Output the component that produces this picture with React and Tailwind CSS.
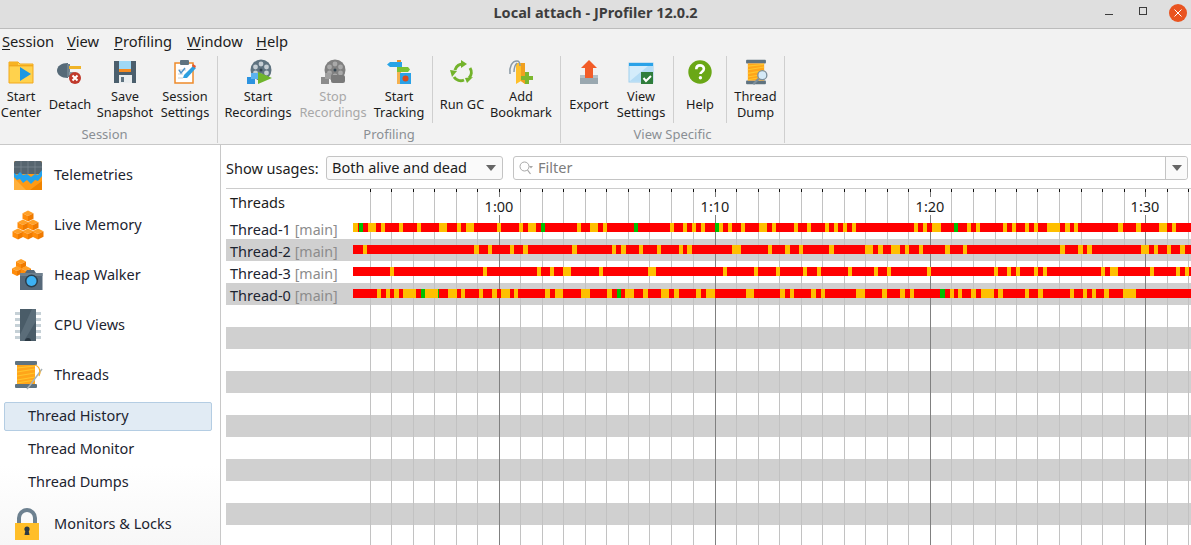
import React from "react";

const FONT = "font-['Noto_Sans','Open_Sans',sans-serif]";

function Cube({ x, y, s = 5.5 }) {
  const h = s / 2;
  return (
    <g>
      <polygon points={`${x},${y - s} ${x + s},${y - h} ${x},${y} ${x - s},${y - h}`} fill="#ffa028" />
      <polygon points={`${x - s},${y - h} ${x},${y} ${x},${y + s} ${x - s},${y + h}`} fill="#ff8c0a" />
      <polygon points={`${x + s},${y - h} ${x},${y} ${x},${y + s} ${x + s},${y + h}`} fill="#ef7a00" />
    </g>
  );
}

function Spool() {
  return (
    <g>
      <rect x="3" y="2" width="22" height="4" rx="1" fill="#5f7380" />
      <rect x="3" y="25" width="22" height="4" rx="1" fill="#5f7380" />
      <rect x="5" y="6" width="18" height="19" fill="#ffa51a" />
      <path d="M5 9l18-2M5 13l18-3M5 17l18-3M5 21l18-3M5 24l18-3" stroke="#ffc62e" strokeWidth="1.2" />
    </g>
  );
}

function Reel({ c = "#5f7380", hole = "#c5ced4" }) {
  return (
    <g>
      <circle cx="15" cy="11" r="10.5" fill={c} />
      {[[15, 5], [15, 17], [9.5, 8], [20.5, 8], [9.5, 14], [20.5, 14]].map(([a, b], i) => (
        <circle key={i} cx={a} cy={b} r="2.4" fill={hole} />
      ))}
      <circle cx="15" cy="11" r="1.5" fill="#33444f" />
    </g>
  );
}

const icons = {
  startCenter: (
    <svg width="26" height="26" viewBox="0 0 26 26">
      <path d="M1 4h9l2 2h13v19H1z" fill="#ffd24d" stroke="#f2a81d" />
      <rect x="1" y="4" width="9" height="4" fill="#f7b322" />
      <rect x="1" y="7" width="24" height="1.4" fill="#f2a81d" />
      <polygon points="12,9 23,16 12,23" fill="#1c97e2" />
    </svg>
  ),
  detach: (
    <svg width="26" height="26" viewBox="0 0 26 26">
      <path d="M11 5v15C4 20 0 16.500 0 12.500S4 5 11 5z" fill="#566a78" />
      <rect x="10" y="6" width="3" height="13" fill="#6f818d" />
      <rect x="12" y="8" width="12" height="3" fill="#f0b429" />
      <rect x="12" y="14" width="5" height="3" fill="#8899a3" />
      <circle cx="18" cy="20" r="6" fill="#c0392b" />
      <path d="M15.500 17.500l5 5m0-5l-5 5" stroke="#fff" strokeWidth="2" />
    </svg>
  ),
  save: (
    <svg width="26" height="26" viewBox="0 0 26 26">
      <path d="M2 3h22v22H2z" fill="#4b5f6d" />
      <rect x="7" y="3" width="12" height="8" fill="#9fd8f5" />
      <rect x="7" y="11" width="12" height="3" fill="#f58a1f" />
      <rect x="7" y="17" width="13" height="8" fill="#e9edef" />
      <rect x="9" y="19" width="3" height="5" fill="#5f7380" />
    </svg>
  ),
  settings: (
    <svg width="26" height="26" viewBox="0 0 26 26">
      <rect x="3" y="5" width="18" height="20" fill="#fff" stroke="#ee8a2a" strokeWidth="1.5" />
      <rect x="8" y="2" width="9" height="5" rx="1" fill="#5f7380" />
      <path d="M6 12h8M6 16h5M6 20h5" stroke="#c7cfd4" strokeWidth="1.2" />
      <path d="M11 20l1-3 9-9 3 2-9 10z" fill="#2d9fe0" />
      <path d="M21 6l3 2-1 2-3-2z" fill="#e8552c" />
      <path d="M7 12l2 3 4-5" stroke="#4f93c9" strokeWidth="1.4" fill="none" />
    </svg>
  ),
  startRec: (
    <svg width="28" height="26" viewBox="0 0 28 26">
      <g transform="translate(2 1)"><Reel /></g>
      <rect x="3" y="19" width="8" height="7" fill="#2c93e0" />
      <rect x="7" y="15" width="7" height="6" fill="#5cb3ef" />
      <polygon points="14,14 28,20 14,26" fill="#6fb52c" />
    </svg>
  ),
  stopRec: (
    <svg width="28" height="26" viewBox="0 0 28 26">
      <g transform="translate(1 1)"><Reel c="#808080" hole="#a9a9a9" /></g>
      <rect x="2" y="19" width="8" height="7" fill="#8c8c8c" />
      <rect x="6" y="15" width="6" height="6" fill="#a0a0a0" />
      <rect x="12" y="17" width="14" height="8" rx="2" fill="#7a7a7a" />
    </svg>
  ),
  track: (
    <svg width="26" height="26" viewBox="0 0 26 26">
      <rect x="11" y="2" width="4" height="24" fill="#f5b14f" />
      <rect x="11" y="2" width="4" height="2" fill="#ef8d1f" />
      <polygon points="1,6.500 4,4 16,4 16,9 4,9" fill="#28a4e6" />
      <polygon points="11,9 22,9 24,11.500 22,14 11,14" fill="#7cc231" />
      <rect x="14" y="15" width="11" height="11" fill="#2aa2e8" />
      <circle cx="19.500" cy="20.500" r="3" fill="#d94a1c" />
    </svg>
  ),
  gc: (
    <svg width="26" height="26" viewBox="0 0 26 26">
      <g fill="none" stroke="#73b32b" strokeWidth="3">
        <path d="M6 12a8 8 0 0 1 9-6" />
        <path d="M21 10a8 8 0 0 1-1 10" />
        <path d="M15 22a8 8 0 0 1-10-3" />
      </g>
      <polygon points="12,2 18,6 12,10" fill="#73b32b" />
      <polygon points="24,19 16,20 18,25" fill="#73b32b" />
      <polygon points="1,12 8,13 3,19" fill="#73b32b" />
    </svg>
  ),
  bookmark: (
    <svg width="28" height="26" viewBox="0 0 28 26">
      <path d="M9 5h9v21l-4-3-5 3z" fill="#ffc02a" />
      <path d="M14 5h4v21l-4-3z" fill="#f0a020" />
      <path d="M3 16c-1-7 2-13 7-13 2 0 3 2 3 5M7 14c0-4 1-7 3-9" stroke="#8a9aa5" strokeWidth="1.500" fill="none" />
      <path d="M14 20h12M20 14v12" stroke="#7cb82f" strokeWidth="4" />
    </svg>
  ),
  exportI: (
    <svg width="22" height="26" viewBox="0 0 22 26">
      <rect x="2" y="17" width="18" height="9" fill="#b3bfc6" />
      <rect x="2" y="20" width="18" height="6" fill="#9aa8b0" />
      <polygon points="11,2 19,10 15,10 15,20 7,20 7,10 3,10" fill="#f25c28" />
    </svg>
  ),
  viewSettings: (
    <svg width="26" height="26" viewBox="0 0 26 26">
      <rect x="1" y="5" width="24" height="19" fill="#d4ecfb" stroke="#9fd0ee" />
      <rect x="1" y="5" width="24" height="3" fill="#2aa2e8" />
      <polygon points="2,23 20,8 24,8 24,23" fill="#b5dcf5" />
      <rect x="13" y="14" width="12" height="12" fill="#2f7d3b" />
      <path d="M15.500 20l2.500 3 5-5" stroke="#fff" strokeWidth="2" fill="none" />
    </svg>
  ),
  help: (
    <svg width="24" height="26" viewBox="0 0 24 26">
      <circle cx="12" cy="14" r="11.700" fill="#6aa716" />
      <path d="M8.300 11.200c0-2.500 1.800-3.800 3.800-3.800s3.800 1.300 3.800 3.400c0 2.900-3.500 2.800-3.500 5.300" stroke="#fff" strokeWidth="2.600" fill="none" />
      <circle cx="12.400" cy="19.800" r="1.700" fill="#fff" />
    </svg>
  ),
  dump: (
    <svg width="26" height="28" viewBox="0 0 28 31">
      <Spool />
      <circle cx="21" cy="19" r="5" fill="#d5eaf7" stroke="#7d8f9b" strokeWidth="1.500" />
      <path d="M17 23l-6 6" stroke="#7d8f9b" strokeWidth="2.400" />
    </svg>
  ),
  telemetries: (
    <svg width="32" height="32" viewBox="0 0 32 32">
      <rect x="2" y="2" width="28" height="29" rx="1.500" fill="#ff9a14" />
      <polygon points="2,31 2,19 14,31" fill="#ffb03c" />
      <polygon points="30,22 18,31 30,31" fill="#f08400" />
      <path d="M3.500 2h25A1.500 1.500 0 0 1 30 3.500V15H2V3.500A1.500 1.500 0 0 1 3.500 2z" fill="#56656f" />
      <path d="M9 2v13M16 2v13M23 2v13M2 8h28" stroke="#7d8a93" strokeWidth="0.700" />
      <path d="M2 14l3 2 3-3 3 3 4-1 4 3 4-3 3 1 4-5v6l-4 5-3-1-4 4-4-4-4 3-3-4-3 1-3-3z" fill="#22a3ee" />
    </svg>
  ),
  memory: (
    <svg width="32" height="32" viewBox="0 0 32 32">
      <Cube x={16} y={7} />
      <Cube x={11} y={16} />
      <Cube x={21} y={16} />
      <Cube x={6} y={25} />
      <Cube x={16} y={25} />
      <Cube x={26} y={25} />
    </svg>
  ),
  heap: (
    <svg width="32" height="32" viewBox="0 0 32 32">
      <Cube x={9} y={5} s={5} />
      <Cube x={5} y={12} s={5} />
      <Cube x={14} y={12} s={5} />
      <path d="M8 14h5l2-3h7l2 3h6.500v17H8z" fill="#56697a" />
      <rect x="8" y="14" width="22.500" height="3" fill="#6f808e" />
      <circle cx="19.500" cy="22" r="6.500" fill="#2a3f4e" />
      <circle cx="19.500" cy="22" r="5" fill="#3cb1f3" />
    </svg>
  ),
  cpu: (
    <svg width="32" height="32" viewBox="0 0 32 32">
      {[4, 10, 16, 22, 28].map((y) => (
        <rect key={y} x="3" y={y - 1} width="26" height="3" fill="#c5d0d6" />
      ))}
      <rect x="8" y="0" width="16" height="32" fill="#4a5c68" />
      <polygon points="24,0 24,12 12,32 8,32 8,26 20,0" fill="#5b6d79" />
      <path d="M13 32a3 3 0 0 1 6 0z" fill="#2a3842" />
    </svg>
  ),
  threads: (
    <svg width="32" height="32" viewBox="0 0 32 32">
      <Spool />
      <path d="M30 10l-11 15-4 5" stroke="#a7b2b9" strokeWidth="1.500" fill="none" />
      <path d="M23 6c3 1 5 4 5 8l-1 3" stroke="#ffb01f" strokeWidth="1.200" fill="none" />
    </svg>
  ),
  lock: (
    <svg width="32" height="32" viewBox="0 0 32 32">
      <path d="M7 17V10a8 8 0 0 1 16 0v7" stroke="#6d8190" strokeWidth="4" fill="none" />
      <rect x="3" y="15" width="24" height="17" fill="#ffbe28" />
      <circle cx="15" cy="21" r="2.600" fill="#2c3a44" />
      <path d="M13.500 22h3l1 5h-5z" fill="#2c3a44" />
    </svg>
  ),
};

function ToolButton({ icon, lines, w, disabled }) {
  return (
    <div className={`${w} flex flex-col items-center shrink-0`}>
      <div className="h-[34px] flex items-start justify-center pt-[4px]">{icons[icon]}</div>
      <div className={`h-[32px] flex flex-col justify-center items-center text-[12.800px] leading-[16px] whitespace-nowrap ${disabled ? "text-[#a8a8a8]" : "text-[#1c1c1c]"}`}>
        {lines.map((l) => (
          <span key={l}>{l}</span>
        ))}
      </div>
    </div>
  );
}

const ShortSep = () => <div className="w-px h-[67px] mt-[2px] bg-[#cfcfcf] shrink-0" />;

function Group({ label, w, labelPad = "", children }) {
  return (
    <div className={`${w} h-[87px] mt-[2px] flex flex-col border-r border-[#cfcfcf] shrink-0`}>
      <div className="flex h-[70px] -mt-[2px]">{children}</div>
      <div className={`text-center text-[13px] leading-[13px] pt-[4px] text-[#8a8f94] ${labelPad}`}>{label}</div>
    </div>
  );
}

function SideItem({ icon, label }) {
  return (
    <div className="h-[50px] flex items-center pl-[12px] shrink-0">
      <div className="w-8 h-8 flex items-center justify-center">{icons[icon]}</div>
      <span className="ml-[10px] text-[14.500px] text-[#1c2430]">{label}</span>
    </div>
  );
}

const Y = "#ffbf00";
const G = "#00c000";
const R1 = [[353,358],[368,376],[381,385],[399,403],[417,421],[439,447],[457,461],[466,474],[497,501],[519,523],[528,536],[577,581],[590,598],[603,607],[670,674],[683,687],[692,696],[701,705],[719,723],[728,732],[741,745],[759,767],[772,776],[794,798],[807,811],[825,829],[834,838],[843,847],[852,856],[914,918],[923,927],[932,941],[967,971],[976,980],[1003,1007],[1012,1016],[1025,1029],[1034,1038],[1047,1060],[1065,1070],[1074,1078],[1118,1123],[1136,1141],[1159,1167],[1172,1176],[359,363,G],[541,545,G],[634,638,G],[715,719,G],[954,958,G]];
const R2 = [[363,367],[474,479],[488,492],[510,514],[523,528],[572,577],[612,616],[621,626],[639,643],[657,661],[679,683],[687,692],[732,741],[768,772],[785,790],[799,803],[829,834],[865,873],[878,883],[891,900],[905,909],[919,923],[945,950],[963,967],[1060,1065],[1078,1083],[1087,1092],[1141,1149],[1154,1158],[1167,1171],[1180,1185]];
const R3 = [[390,394],[483,487],[537,541],[550,554],[563,571],[599,603],[648,656],[723,727],[754,758],[776,780],[803,807],[817,821],[848,852],[874,878],[887,891],[927,931],[994,998],[1007,1011],[1016,1020],[1034,1038],[1043,1047],[1101,1105],[1110,1118],[1150,1154],[1176,1180],[1185,1189]];
const R4 = [[377,381],[386,390],[394,399],[403,416],[425,438],[448,457],[461,465],[479,483],[492,497],[501,510],[514,518],[545,550],[555,563],[581,590],[607,612],[625,634],[643,648],[661,669],[674,679],[696,701],[706,715],[746,754],[780,785],[790,794],[811,816],[821,825],[856,865],[882,887],[900,905],[910,914],[950,954],[958,962],[971,976],[981,994],[998,1003],[1025,1029],[1038,1043],[1070,1074],[1083,1087],[1092,1096],[1104,1109],[1123,1136],[421,425,G],[438,439,G],[617,621,G],[940,945,G]];

const TICKS = [370,391,413,434,456,477,499,520,542,563,585,606,628,649,671,693,715,736,758,779,801,822,844,865,887,908,930,951,973,995,1016,1037,1059,1081,1102,1124,1145,1167,1188];
const MAJOR = [499, 715, 930, 1145];

function Bar({ segs }) {
  return (
    <svg width="838" height="9" className="relative z-[2] block shrink-0 mt-[6px]" shapeRendering="crispEdges">
      <rect width="838" height="9" fill="#ff0000" />
      {segs.map(([a, b, c], i) => (
        <rect key={i} x={a - 353} width={b - a} height="9" fill={c || Y} />
      ))}
    </svg>
  );
}

const THREADS = [
  ["Thread-1", R1],
  ["Thread-2", R2],
  ["Thread-3", R3],
  ["Thread-0", R4],
];

function Menu({ l, rest, w }) {
  return (
    <span className={`${w} shrink-0`}>
      <span className="underline underline-offset-2">{l}</span>
      {rest}
    </span>
  );
}

export default function App() {
  return (
    <div className={`w-[1191px] h-[545px] overflow-hidden flex flex-col bg-white ${FONT}`}>
      {/* title bar */}
      <div className="h-[29px] shrink-0 bg-[#dfdfdf] border-b border-[#bcbcbc] grid grid-cols-[1fr_auto_1fr] items-center">
        <div />
        <div className="text-[14.500px] font-bold text-[#3d3d3d] pb-[3px]">Local attach - JProfiler 12.0.2</div>
        <div className="flex justify-end items-center pr-[4px] pb-[1px]">
          <div className="w-[8px] h-[1px] mt-[1px] ml-[1px] bg-[#3c3c3c] mr-[26px]" />
          <div className="w-[8px] h-[8px] mb-[5px] border border-[#3c3c3c] mr-[22px]" />
          <div className="w-[18px] h-[18px] mb-[2px] rounded-full bg-[#e95420] flex items-center justify-center">
            <svg width="8" height="8" viewBox="0 0 8 8"><path d="M0.500 0.500l7 7m0-7l-7 7" stroke="#fff" strokeWidth="1" /></svg>
          </div>
        </div>
      </div>
      {/* menu + toolbar */}
      <div className="h-[116px] shrink-0 bg-[#f2f2f2] border-b border-[#c8c8c8] flex flex-col">
        <div className="h-[25px] shrink-0 flex items-center pl-[2px] text-[14.700px] text-[#1c1c1c]">
          <Menu l="S" rest="ession" w="w-[65px]" />
          <Menu l="V" rest="iew" w="w-[47px]" />
          <Menu l="P" rest="rofiling" w="w-[73px]" />
          <Menu l="W" rest="indow" w="w-[69px]" />
          <Menu l="H" rest="elp" w="w-[50px]" />
        </div>
        <div className="flex h-[87px]">
          <Group label="Session" w="w-[218px]" labelPad="pr-[8px]">
            <ToolButton icon="startCenter" lines={["Start", "Center"]} w="w-[42px]" />
            <ToolButton icon="detach" lines={["Detach"]} w="w-[56px]" />
            <ToolButton icon="save" lines={["Save", "Snapshot"]} w="w-[54px]" />
            <ToolButton icon="settings" lines={["Session", "Settings"]} w="w-[66px]" />
          </Group>
          <Group label="Profiling" w="w-[343px]">
            <ToolButton icon="startRec" lines={["Start", "Recordings"]} w="w-[80px]" />
            <ToolButton icon="stopRec" lines={["Stop", "Recordings"]} w="w-[70px]" disabled />
            <ToolButton icon="track" lines={["Start", "Tracking"]} w="w-[62px]" />
            <div className="w-[2px]" />
            <ShortSep />
            <ToolButton icon="gc" lines={["Run GC"]} w="w-[58px]" />
            <ToolButton icon="bookmark" lines={["Add", "Bookmark"]} w="w-[60px]" />
          </Group>
          <Group label="View Specific" w="w-[224px]">
            <ToolButton icon="exportI" lines={["Export"]} w="w-[56px]" />
            <ToolButton icon="viewSettings" lines={["View", "Settings"]} w="w-[48px]" />
            <div className="w-[8px]" />
            <ShortSep />
            <ToolButton icon="help" lines={["Help"]} w="w-[52px]" />
            <ShortSep />
            <ToolButton icon="dump" lines={["Thread", "Dump"]} w="w-[57px]" />
          </Group>
        </div>
      </div>
      {/* body */}
      <div className="flex flex-1 min-h-0">
        <div className="w-[221px] shrink-0 border-r border-[#c8c8c8] flex flex-col pt-[5px] overflow-hidden bg-gradient-to-b from-white from-[80%] to-[#f7f7f7]">
          <SideItem icon="telemetries" label="Telemetries" />
          <SideItem icon="memory" label="Live Memory" />
          <SideItem icon="heap" label="Heap Walker" />
          <SideItem icon="cpu" label="CPU Views" />
          <SideItem icon="threads" label="Threads" />
          <div className="h-[33px] shrink-0 flex items-center pl-[4px] pr-[8px]">
            <div className="w-full h-[29px] rounded-[2px] bg-[#e1ebf4] border border-[#b4cde3] pl-[23px] pb-[2px] flex items-center text-[14.500px] text-[#1c2430]">Thread History</div>
          </div>
          <div className="h-[33px] shrink-0 flex items-center pl-[28px] pb-[2px] text-[14.500px] text-[#1c2430]">Thread Monitor</div>
          <div className="h-[33px] shrink-0 flex items-center pl-[28px] pb-[2px] text-[14.500px] text-[#1c2430]">Thread Dumps</div>
          <SideItem icon="lock" label="Monitors & Locks" />
        </div>
        <div className="flex-1 min-w-0 flex flex-col pl-[5px] overflow-hidden">
          <div className="h-[43px] shrink-0 flex items-start pt-[11px] text-[14.500px] text-[#1c1c1c]">
            <span className="w-[100px] leading-[24px] shrink-0">Show usages:</span>
            <div className="w-[177px] h-[24px] shrink-0 border border-[#c4c4c4] rounded-[3px] bg-[#fafafa] flex items-center justify-between pl-[5px] pr-[5px]">
              <span>Both alive and dead</span>
              <svg width="10" height="6" viewBox="0 0 10 6" className="mr-[1px]"><polygon points="0,0 10,0 5,6" fill="#666" /></svg>
            </div>
            <div className="ml-[10px] w-[675px] h-[24px] shrink-0 border border-[#c4c4c4] rounded-[3px] bg-white flex items-center">
              <div className="flex-1 flex items-center pl-[5px] text-[#7d7d7d]">
                <svg width="15" height="14" viewBox="0 0 15 14" className="mr-[4px]">
                  <circle cx="5.500" cy="5.500" r="4.500" fill="none" stroke="#a7a7a7" />
                  <path d="M8.500 9l3 4" stroke="#a7a7a7" strokeWidth="1.200" />
                  <polygon points="10,5 14,5 12,7.500" fill="#a7a7a7" />
                </svg>
                <span>Filter</span>
              </div>
              <div className="w-[22px] h-full border-l border-[#c4c4c4] bg-[#fafafa] rounded-r-[3px] flex items-center justify-center">
                <svg width="10" height="6" viewBox="0 0 10 6"><polygon points="0,0 10,0 5,6" fill="#666" /></svg>
              </div>
            </div>
          </div>
          <div className="relative flex-1 min-h-0 border-t border-[#cccccc] overflow-hidden">
            <svg width="965" height="360" className="absolute left-0 top-0 z-[1]" shapeRendering="crispEdges">
              {TICKS.map((t) => (
                <g key={t}>
                  <rect x={t - 226} y="0" width="1" height="360" fill={MAJOR.includes(t) ? "#808080" : "#c2c2c2"} />
                  <rect x={t - 226} y="0" width="1" height="3" fill="#111" />
                </g>
              ))}
            </svg>
            <div className="h-[28px] relative text-[14.500px] text-[#1c1c1c]">
              <span className="absolute left-[4px] top-[3px] leading-[20px]">Threads</span>
              {[["1:00", 499], ["1:10", 715], ["1:20", 930], ["1:30", 1145]].map(([l, t]) => (
                <span key={l} className="absolute top-[8px] w-[32px] h-[18px] leading-[18px] text-center bg-white z-[2]" style={{ left: t - 226 - 16 }}>
                  {l}
                </span>
              ))}
            </div>
            {THREADS.map(([name, segs], i) => (
              <div key={name} className={`h-[22px] flex items-start text-[14.500px] ${i % 2 ? "bg-[#d0d0d0]" : ""}`}>
                <div className="w-[127px] shrink-0 pl-[4px] pt-[2px] leading-[20px] whitespace-nowrap text-[#1c2430]">
                  {name} <span className="text-[14.200px] text-[#8c8c8c]">[main]</span>
                </div>
                <Bar segs={segs} />
              </div>
            ))}
            {[0, 1, 2, 3, 4, 5, 6, 7, 8, 9, 10].map((i) => (
              <div key={i} className={`h-[22px] ${i % 2 === 0 ? "" : "bg-[#d0d0d0]"}`} />
            ))}
          </div>
        </div>
      </div>
    </div>
  );
}
